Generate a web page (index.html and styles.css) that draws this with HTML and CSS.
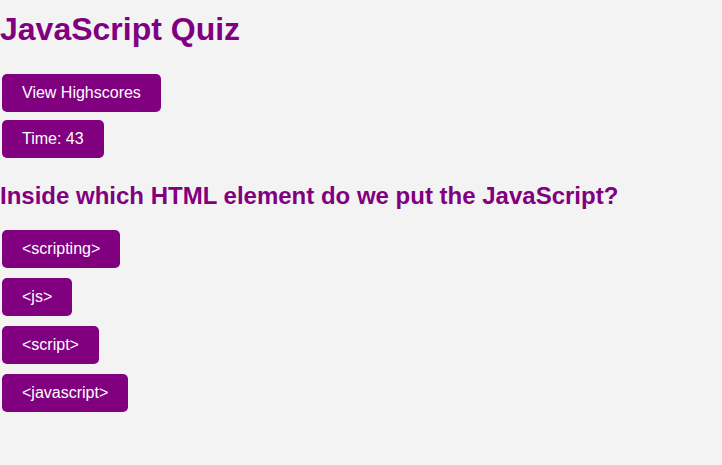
FILE: index.html
```html
<!DOCTYPE html>
<html lang="en">
<head>
<meta charset="utf-8">
<title>JavaScript Quiz</title>
<link rel="stylesheet" href="styles.css">
</head>
<body>
<header>
<h1>JavaScript Quiz</h1>
<nav class="toolbar">
<button class="btn" type="button">View Highscores</button>
<div class="btn timer">Time: 43</div>
</nav>
</header>
<main>
<h2>Inside which HTML element do we put the JavaScript?</h2>
<div class="choices">
<button class="btn" type="button">&lt;scripting&gt;</button>
<button class="btn" type="button">&lt;js&gt;</button>
<button class="btn" type="button">&lt;script&gt;</button>
<button class="btn" type="button">&lt;javascript&gt;</button>
</div>
</main>
</body>
</html>
```
FILE: styles.css
```css
body {
  margin: 0;
  background: #f3f3f3;
  color: purple;
  font-family: Arial, "Liberation Sans", sans-serif;
}

h1 {
  margin: 10px 0 26px;
  font-size: 32px;
  line-height: 38px;
}

h2 {
  margin: 24px 0 20px;
  font-size: 24px;
  line-height: 28px;
}

.toolbar,
.choices {
  display: flex;
  flex-direction: column;
  align-items: flex-start;
  gap: 8px;
  padding: 0 2px;
}

.choices {
  gap: 10px;
}

.btn {
  padding: 10px 20px;
  border: 0;
  border-radius: 5px;
  background: purple;
  color: white;
  font-family: inherit;
  font-size: 16px;
  line-height: 18px;
}

button.btn {
  cursor: pointer;
}
```
